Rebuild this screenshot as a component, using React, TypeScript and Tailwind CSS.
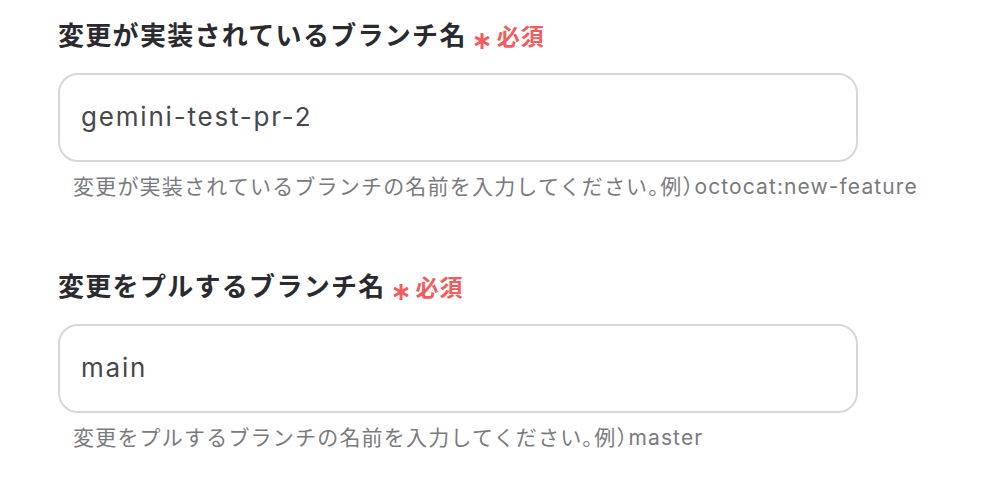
import React from "react";

const Asterisk = () => (
  <svg width="18" height="18" viewBox="0 0 18 18" className="mt-[10px]" aria-hidden>
    <g stroke="#f25c5c" strokeWidth="3" strokeLinecap="butt">
      <line x1="9" y1="1" x2="9" y2="17" />
      <line x1="2.1" y1="5" x2="15.9" y2="13" />
      <line x1="2.1" y1="13" x2="15.9" y2="5" />
    </g>
  </svg>
);

function Field({ label, value, hintJa, hintEx }: { label: string; value: string; hintJa: string; hintEx: string }) {
  return (
    <div className="flex flex-col">
      <div className="flex items-center h-[36px]">
        <span className="text-[26px] leading-[36px] font-bold text-[#2b2b2f] tracking-[1.3px]">{label}</span>
        <span className="ml-[6px] flex items-center">
          <Asterisk />
        </span>
        <span className="ml-[6px] text-[23px] leading-[36px] font-bold text-[#f25c5c] tracking-[1px] mt-[2px]">必須</span>
      </div>
      <div className="mt-[19px] w-[800px] h-[89px] rounded-[20px] border-2 border-[#d6d6de] bg-white flex items-center px-[21px]">
        <span className="text-[26px] text-[#47474c] tracking-[1.8px] mt-[-2px]">{value}</span>
      </div>
      <div className="mt-[10px] pl-[15px] text-[21px] leading-[30px] text-[#7a7a7e] tracking-[1.2px] whitespace-nowrap">
        {hintJa}
        <span className="tracking-[-9px]">。</span>
        <span>例</span>
        <span className="tracking-[-9px]">）</span>
        <span className="tracking-[1.1px]">{hintEx}</span>
      </div>
    </div>
  );
}

export default function App() {
  return (
    <div
      className="w-[996px] h-[498px] bg-white pl-[58px] pt-[18px] flex flex-col gap-[67px] overflow-hidden"
      style={{ fontFamily: 'Inter, "Noto Sans CJK JP", sans-serif' }}
    >
      <Field
        label="変更が実装されているブランチ名"
        value="gemini-test-pr-2"
        hintJa="変更が実装されているブランチの名前を入力してください"
        hintEx="octocat:new-feature"
      />
      <Field
        label="変更をプルするブランチ名"
        value="main"
        hintJa="変更をプルするブランチの名前を入力してください"
        hintEx="master"
      />
    </div>
  );
}
